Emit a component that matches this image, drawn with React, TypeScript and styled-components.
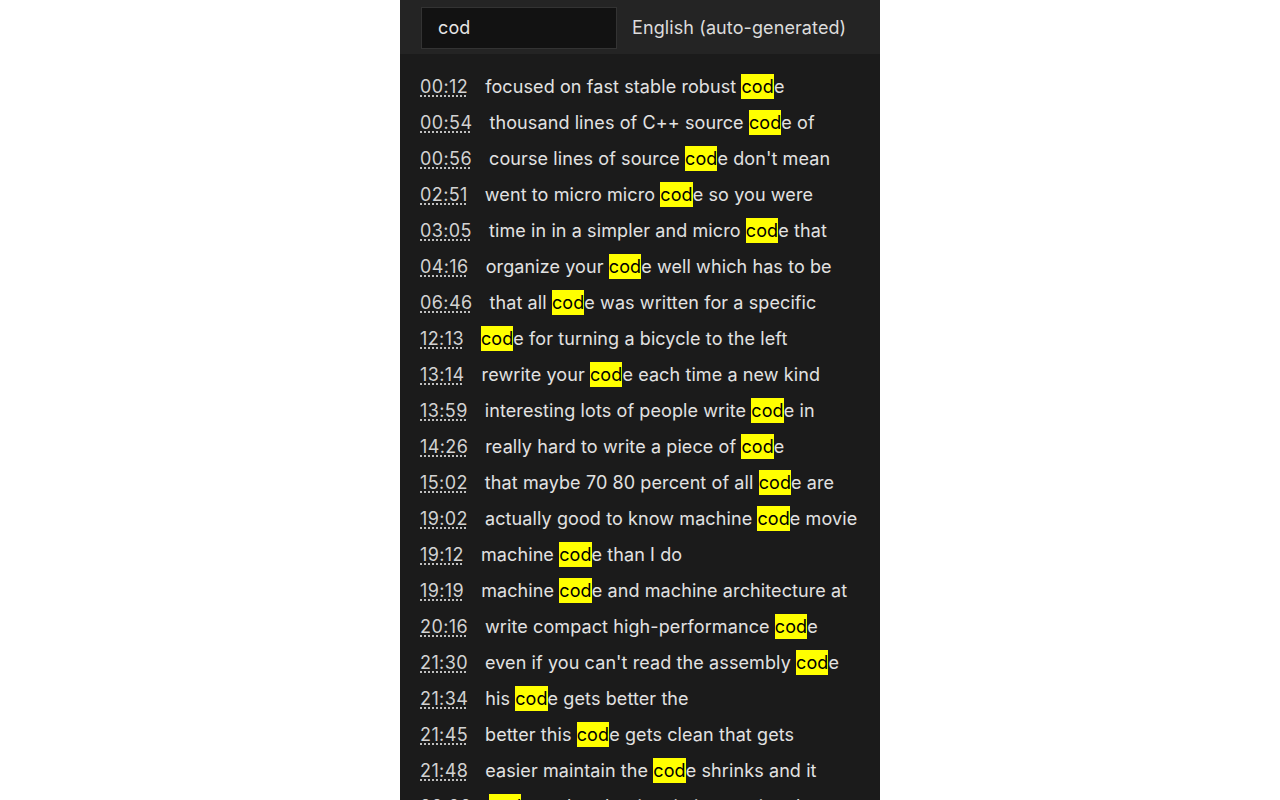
import React from 'react';
import styled, { createGlobalStyle } from 'styled-components';

const GlobalStyle = createGlobalStyle`
  html, body {
    margin: 0;
    padding: 0;
    background: #ffffff;
  }
  body {
    font-family: Inter, 'Liberation Sans', sans-serif;
  }
`;

const Panel = styled.div`
  width: 480px;
  height: 800px;
  margin: 0 auto;
  background-color: #1b1b1b;
  overflow: hidden;
  font-size: 18px;
  letter-spacing: 0.1px;
`;

const Header = styled.div`
  display: flex;
  align-items: center;
  gap: 15px;
  height: 54px;
  padding: 1px 21px 0;
  background-color: #242424;
  box-sizing: border-box;
`;

const SearchInput = styled.input`
  width: 196px;
  height: 42px;
  box-sizing: border-box;
  padding: 0 16px;
  background-color: #121212;
  border: 1px solid #333333;
  color: #e6e6e6;
  font-family: inherit;
  font-size: 18px;
  letter-spacing: 0.1px;
  outline: none;
`;

const Language = styled.span`
  color: #dcdcdc;
`;

const List = styled.div`
  padding: 14px 0 0 20px;
`;

const Row = styled.div`
  display: flex;
  align-items: center;
  height: 36px;
  white-space: nowrap;
  color: #e2e2e2;
`;

const Time = styled.span`
  margin-right: 17px;
  color: #d2d2d2;
  letter-spacing: 0.4px;
  text-decoration: underline dotted;
  text-underline-offset: 3px;
`;

const Mark = styled.mark`
  background-color: #ffff00;
  color: #000000;
  padding: 2px 0;
`;

type Line = { time: string; before: string; after: string };

const lines: Line[] = [
  { time: '00:12', before: 'focused on fast stable robust ', after: 'e' },
  { time: '00:54', before: 'thousand lines of C++ source ', after: 'e of' },
  { time: '00:56', before: 'course lines of source ', after: "e don't mean" },
  { time: '02:51', before: 'went to micro micro ', after: 'e so you were' },
  { time: '03:05', before: 'time in in a simpler and micro ', after: 'e that' },
  { time: '04:16', before: 'organize your ', after: 'e well which has to be' },
  { time: '06:46', before: 'that all ', after: 'e was written for a specific' },
  { time: '12:13', before: '', after: 'e for turning a bicycle to the left' },
  { time: '13:14', before: 'rewrite your ', after: 'e each time a new kind' },
  { time: '13:59', before: 'interesting lots of people write ', after: 'e in' },
  { time: '14:26', before: 'really hard to write a piece of ', after: 'e' },
  { time: '15:02', before: 'that maybe 70 80 percent of all ', after: 'e are' },
  { time: '19:02', before: 'actually good to know machine ', after: 'e movie' },
  { time: '19:12', before: 'machine ', after: 'e than I do' },
  { time: '19:19', before: 'machine ', after: 'e and machine architecture at' },
  { time: '20:16', before: 'write compact high-performance ', after: 'e' },
  { time: '21:30', before: "even if you can't read the assembly ", after: 'e' },
  { time: '21:34', before: 'his ', after: 'e gets better the' },
  { time: '21:45', before: 'better this ', after: 'e gets clean that gets' },
  { time: '21:48', before: 'easier maintain the ', after: 'e shrinks and it' },
  { time: '22:00', before: '', after: ' so what the time in instruction that' },
];

const App: React.FC = () => {
  return (
    <>
      <GlobalStyle />
      <Panel>
        <Header>
          <SearchInput defaultValue="cod" />
          <Language>English (auto-generated)</Language>
        </Header>
        <List>
          {lines.map(line => (
            <Row key={line.time}>
              <Time>{line.time}</Time>
              <span>
                {line.before}
                <Mark>cod</Mark>
                {line.after}
              </span>
            </Row>
          ))}
        </List>
      </Panel>
    </>
  );
};

export default App;
